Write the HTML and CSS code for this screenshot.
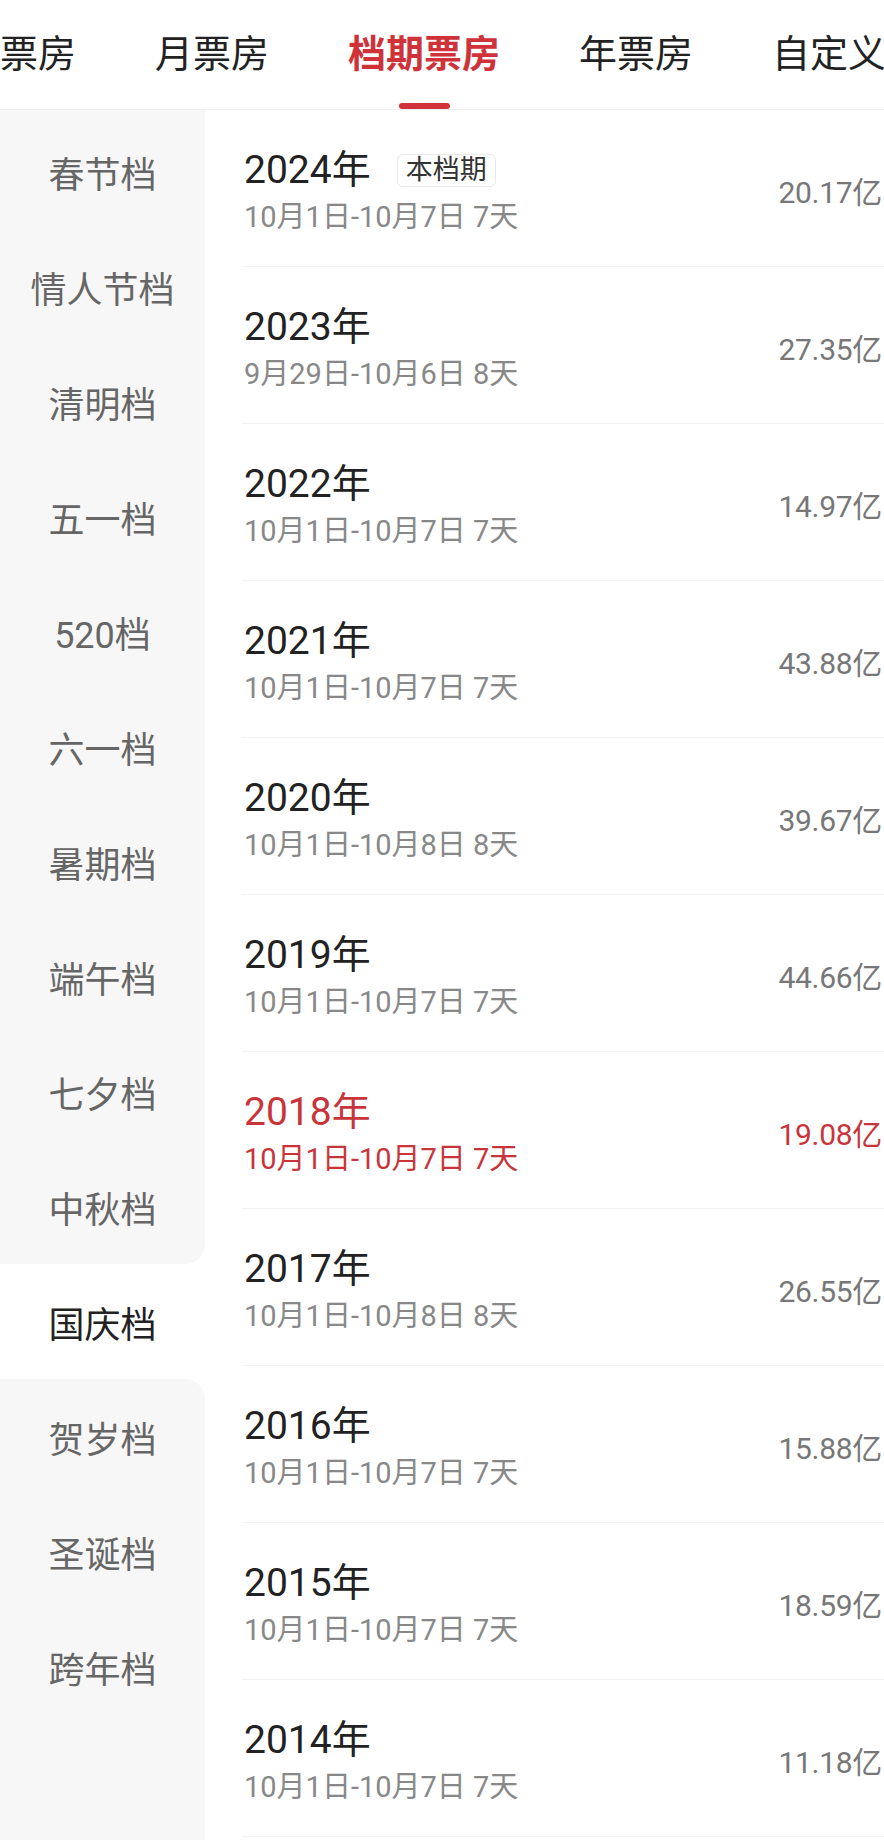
FILE: index.html
```html
<!DOCTYPE html>
<html lang="zh-CN">
<head>
<meta charset="utf-8">
<title>档期票房</title>
<link rel="stylesheet" href="styles.css">
</head>
<body>
<div class="tabs">
  <div class="tab"><span class="tab-label">票房</span></div>
  <div class="tab"><span class="tab-label">月票房</span></div>
  <div class="tab active"><span class="tab-label">档期票房</span><span class="tab-ind"></span></div>
  <div class="tab"><span class="tab-label">年票房</span></div>
  <div class="tab"><span class="tab-label">自定义</span></div>
</div>
<div class="main">
  <nav class="side">
    <div class="side-item">春节档</div>
    <div class="side-item">情人节档</div>
    <div class="side-item">清明档</div>
    <div class="side-item">五一档</div>
    <div class="side-item">520档</div>
    <div class="side-item">六一档</div>
    <div class="side-item">暑期档</div>
    <div class="side-item">端午档</div>
    <div class="side-item">七夕档</div>
    <div class="side-item prev">中秋档</div>
    <div class="side-item active">国庆档</div>
    <div class="side-item next">贺岁档</div>
    <div class="side-item">圣诞档</div>
    <div class="side-item">跨年档</div>
    <div class="side-fill"></div>
  </nav>
  <section class="list">
    <div class="row">
      <div class="info"><div class="year">2024年<span class="badge">本档期</span></div><div class="date">10月1日-10月7日 7天</div></div>
      <div class="amt">20.17亿</div>
    </div>
    <div class="row">
      <div class="info"><div class="year">2023年</div><div class="date">9月29日-10月6日 8天</div></div>
      <div class="amt">27.35亿</div>
    </div>
    <div class="row">
      <div class="info"><div class="year">2022年</div><div class="date">10月1日-10月7日 7天</div></div>
      <div class="amt">14.97亿</div>
    </div>
    <div class="row">
      <div class="info"><div class="year">2021年</div><div class="date">10月1日-10月7日 7天</div></div>
      <div class="amt">43.88亿</div>
    </div>
    <div class="row">
      <div class="info"><div class="year">2020年</div><div class="date">10月1日-10月8日 8天</div></div>
      <div class="amt">39.67亿</div>
    </div>
    <div class="row">
      <div class="info"><div class="year">2019年</div><div class="date">10月1日-10月7日 7天</div></div>
      <div class="amt">44.66亿</div>
    </div>
    <div class="row hot">
      <div class="info"><div class="year">2018年</div><div class="date">10月1日-10月7日 7天</div></div>
      <div class="amt">19.08亿</div>
    </div>
    <div class="row">
      <div class="info"><div class="year">2017年</div><div class="date">10月1日-10月8日 8天</div></div>
      <div class="amt">26.55亿</div>
    </div>
    <div class="row">
      <div class="info"><div class="year">2016年</div><div class="date">10月1日-10月7日 7天</div></div>
      <div class="amt">15.88亿</div>
    </div>
    <div class="row">
      <div class="info"><div class="year">2015年</div><div class="date">10月1日-10月7日 7天</div></div>
      <div class="amt">18.59亿</div>
    </div>
    <div class="row">
      <div class="info"><div class="year">2014年</div><div class="date">10月1日-10月7日 7天</div></div>
      <div class="amt">11.18亿</div>
    </div>
  </section>
</div>
</body>
</html>
```

FILE: styles.css
```css
* { box-sizing: border-box; }
html, body { margin: 0; padding: 0; background: #fff; }
body {
  width: 884px;
  overflow: hidden;
  font-family: Roboto, "Noto Sans CJK SC", sans-serif;
  color: #222;
}

.tabs {
  display: flex;
  gap: 79px;
  height: 110px;
  border-bottom: 1px solid #efefef;
  overflow: hidden;
  white-space: nowrap;
}
.tab {
  flex-shrink: 0;
  display: flex;
  flex-direction: column;
  align-items: center;
  padding-top: 35px;
}
.tab-label {
  font-size: 38px;
  line-height: 38px;
  color: #222;
}
.tab.active .tab-label {
  color: #cf3239;
  font-weight: 700;
}
.tab-ind {
  margin-top: 30px;
  width: 51px;
  height: 6px;
  border-radius: 3px;
  background: #cf3239;
}

.main {
  display: flex;
  min-height: calc(100vh - 110px);
}

.side {
  width: 205px;
  flex-shrink: 0;
  display: flex;
  flex-direction: column;
  background: #fff;
}
.side-item {
  height: 115px;
  display: flex;
  align-items: center;
  justify-content: center;
  background: #f7f7f7;
  font-size: 36px;
  color: #666;
}
.side-item:first-child {
  height: 119px;
  padding-top: 4px;
}
.side-item.active {
  background: #fff;
  color: #222;
}
.side-item.prev { border-bottom-right-radius: 20px; }
.side-item.next { border-top-right-radius: 20px; }
.side-fill {
  flex: 1;
  background: #f7f7f7;
}

.list {
  flex: 1;
  min-width: 0;
}
.row {
  height: 157px;
  margin-left: 37px;
  padding: 4px 2px 0 2px;
  border-bottom: 1px solid #f3f3f3;
  display: flex;
  align-items: center;
  justify-content: space-between;
}
.year {
  font-size: 39px;
  line-height: 54px;
  color: #222;
  display: flex;
  align-items: center;
}
.badge {
  margin-left: 26px;
  font-size: 27px;
  line-height: 31px;
  padding: 0 8px;
  border: 1px solid #e8e8e8;
  border-radius: 6px;
  color: #333;
}
.date {
  font-size: 29px;
  line-height: 40px;
  color: #888;
}
.amt {
  font-size: 30px;
  color: #777;
  letter-spacing: -0.3px;
}
.row.hot .year,
.row.hot .date,
.row.hot .amt { color: #c9343b; }
```
